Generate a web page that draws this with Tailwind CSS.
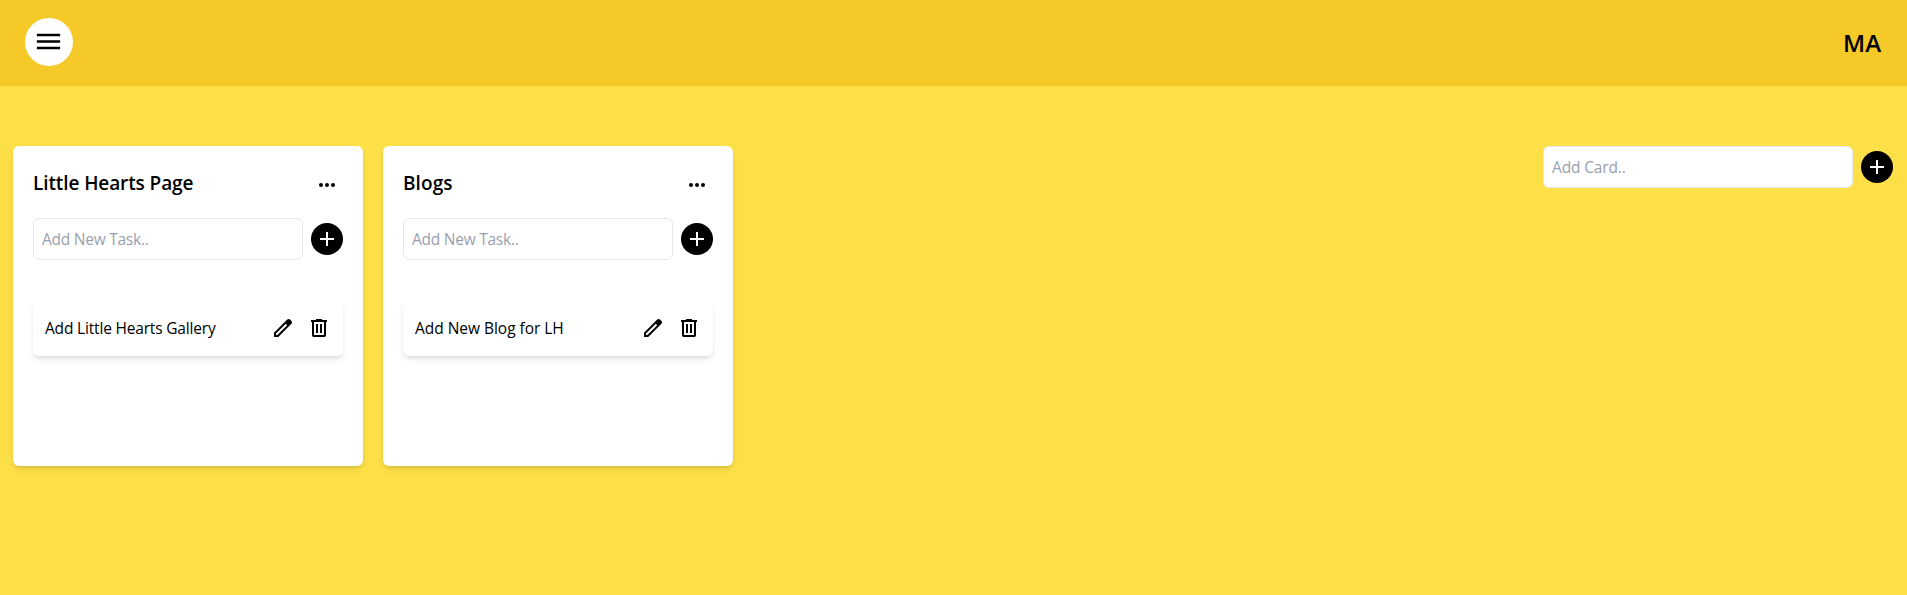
<!DOCTYPE html>
<html lang="en">
<head>
<meta charset="utf-8">
<title>Board</title>
<script src="https://cdn.jsdelivr.net/npm/@tailwindcss/browser@4"></script>
</head>
<body class="min-h-screen bg-[#fddf47] font-['Open_Sans',sans-serif] text-black">
<svg class="hidden">
  <symbol id="menu" viewBox="0 0 24 24"><path d="M3 18v-2h18v2zm0-5v-2h18v2zm0-5V6h18v2z"/></symbol>
  <symbol id="add" viewBox="0 0 24 24"><path d="M11 19v-6H5v-2h6V5h2v6h6v2h-6v6z"/></symbol>
  <symbol id="more" viewBox="0 0 24 24"><circle cx="6" cy="12" r="2"/><circle cx="12" cy="12" r="2"/><circle cx="18" cy="12" r="2"/></symbol>
  <symbol id="edit" viewBox="0 0 24 24"><path d="M5 19h1.425L16.2 9.225 14.775 7.8 5 17.575zm-2 2v-4.25L16.2 3.575q.3-.275.663-.425t.762-.15.775.15.65.45L20.425 5q.3.275.438.65T21 6.4q0 .4-.137.763t-.438.662L7.25 21z"/></symbol>
  <symbol id="delete" viewBox="0 0 24 24"><path d="M7 21q-.825 0-1.412-.587T5 19V6H4V4h5V3h6v1h5v2h-1v13q0 .825-.587 1.413T17 21zM17 6H7v13h10zM9 17h2V8H9zm4 0h2V8h-2z"/></symbol>
</svg>
<header class="flex h-[86px] items-center justify-between bg-[#f5ca28] pr-[26px] pl-[25px]">
  <button class="mb-0.5 flex size-12 items-center justify-center rounded-full bg-white"><svg class="mr-px mb-px size-[31px]"><use href="#menu"/></svg></button>
  <span class="text-2xl font-semibold">MA</span>
</header>
<main class="flex items-start justify-between pt-[60px] pr-3.5 pl-[13px]">
  <div class="flex gap-5">
    <section class="h-80 w-[350px] rounded-md bg-white p-5 shadow-md">
      <div class="flex h-[38px] items-center justify-between">
        <h2 class="pb-1 text-[19px] font-semibold tracking-[-0.1px]">Little Hearts Page</h2>
        <svg class="mr-1 size-6"><use href="#more"/></svg>
      </div>
      <div class="mt-3.5 flex items-center gap-2">
        <input class="h-[42px] w-[270px] rounded-md border border-gray-200 bg-white px-2 text-[15.5px] tracking-[-0.25px] placeholder:text-gray-400" placeholder="Add New Task..">
        <button class="flex size-8 items-center justify-center rounded-full bg-black"><svg class="size-6 fill-white"><use href="#add"/></svg></button>
      </div>
      <div class="mt-10 flex h-14 items-center justify-between rounded-md bg-white px-3 shadow-md">
        <p class="pt-px text-[15.5px] tracking-[-0.18px]">Add Little Hearts Gallery</p>
        <div class="flex gap-3"><svg class="size-6"><use href="#edit"/></svg><svg class="size-6"><use href="#delete"/></svg></div>
      </div>
    </section>
    <section class="h-80 w-[350px] rounded-md bg-white p-5 shadow-md">
      <div class="flex h-[38px] items-center justify-between">
        <h2 class="pb-1 text-[19px] font-semibold tracking-[0.1px]">Blogs</h2>
        <svg class="mr-1 size-6"><use href="#more"/></svg>
      </div>
      <div class="mt-3.5 flex items-center gap-2">
        <input class="h-[42px] w-[270px] rounded-md border border-gray-200 bg-white px-2 text-[15.5px] tracking-[-0.25px] placeholder:text-gray-400" placeholder="Add New Task..">
        <button class="flex size-8 items-center justify-center rounded-full bg-black"><svg class="size-6 fill-white"><use href="#add"/></svg></button>
      </div>
      <div class="mt-10 flex h-14 items-center justify-between rounded-md bg-white px-3 shadow-md">
        <p class="pt-px text-[15.5px] tracking-[-0.03px]">Add New Blog for LH</p>
        <div class="flex gap-3"><svg class="size-6"><use href="#edit"/></svg><svg class="size-6"><use href="#delete"/></svg></div>
      </div>
    </section>
  </div>
  <div class="flex items-center gap-2">
    <input class="h-[42px] w-[310px] rounded-md border border-gray-200 bg-white px-2 text-[15.5px] tracking-[-0.15px] placeholder:text-gray-400" placeholder="Add Card..">
    <button class="flex size-8 items-center justify-center rounded-full bg-black"><svg class="size-6 fill-white"><use href="#add"/></svg></button>
  </div>
</main>
</body>
</html>
